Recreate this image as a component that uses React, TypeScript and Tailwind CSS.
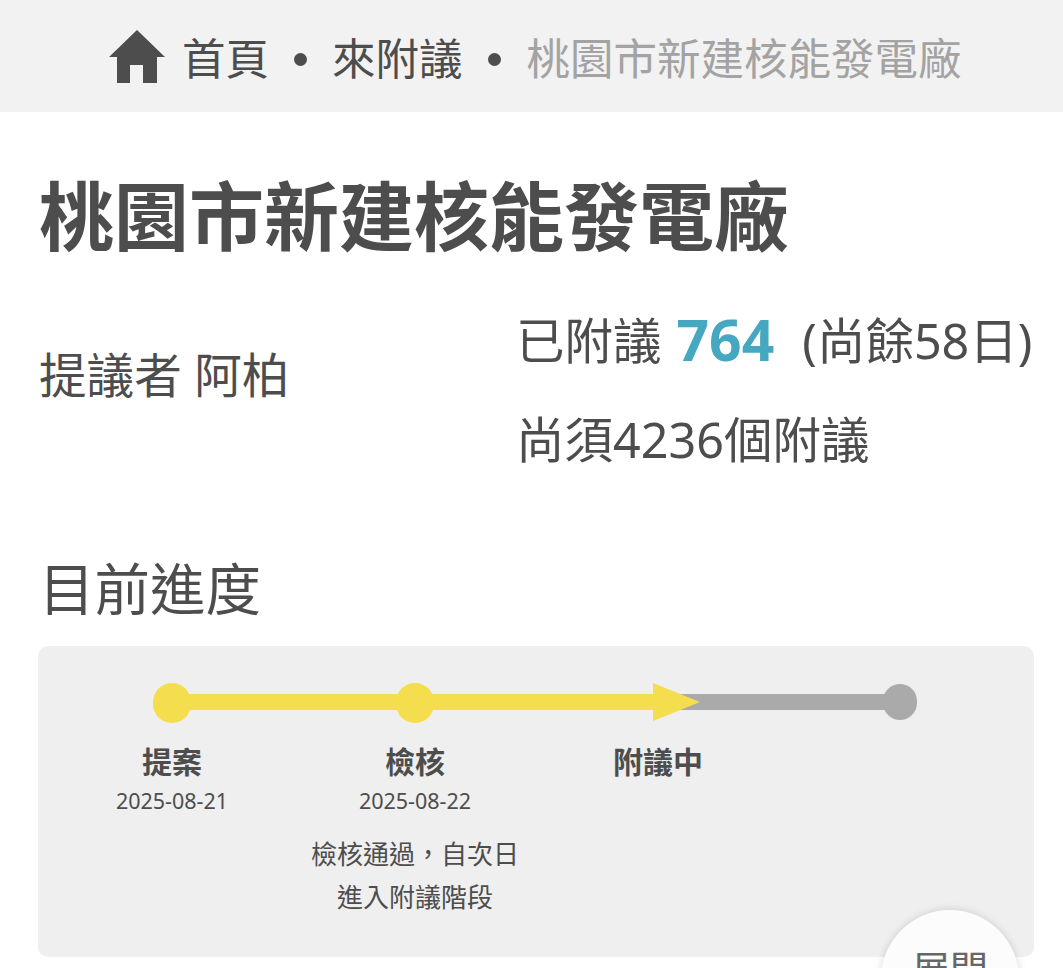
import React from "react";

const font = { fontFamily: '"Noto Sans", "Noto Sans CJK TC", sans-serif' };

function Dot({ gray }: { gray?: boolean }) {
  return <div className={gray ? "relative z-10 mt-[-3px] h-[36px] w-[34px] shrink-0 rounded-full bg-[#aaaaaa]" : "relative z-10 h-[40px] w-[38px] shrink-0 rounded-full bg-[#f5de4d]"} />;
}

function Step({ title, date, note }: { title: string; date?: string; note?: string[] }) {
  return (
    <div className="flex w-[243px] shrink-0 flex-col items-center text-center text-[#4d4d4d]">
      <div className="h-[44px] text-[30px] font-bold leading-[44px]">{title}</div>
      {date && <div className="mt-[2px] h-[30px] text-[21.5px] leading-[30px]">{date}</div>}
      {note && (
        <div className="mt-[17px] text-[26px] leading-[43px]">
          {note.map((n) => (
            <div key={n}>{n}</div>
          ))}
        </div>
      )}
    </div>
  );
}

export default function App() {
  return (
    <div style={font} className="relative h-[968px] w-[1063px] overflow-hidden bg-white text-[#4d4d4d]">
      <nav className="flex h-[112px] items-center bg-[#f2f2f2] pl-[109px] text-[43.5px]">
        <svg width="56" height="56" viewBox="0 0 56 56" className="mr-[17px] mt-[2px] shrink-0" fill="#4d4d4d">
          <path d="M28 1 L56 28 L48 28 L48 54 L34 54 L34 36 L21 36 L21 54 L8 54 L8 28 L0 28 Z" />
        </svg>
        <span className="mt-[6px]">首頁</span>
        <span className="ml-[25px] mr-[25px] mt-[6px] h-[13px] w-[13px] rounded-full bg-[#4d4d4d]" />
        <span className="mt-[6px]">來附議</span>
        <span className="ml-[25px] mr-[26px] mt-[6px] h-[13px] w-[13px] rounded-full bg-[#4d4d4d]" />
        <span className="mt-[6px] text-[#a3a3a3]">桃園市新建核能發電廠</span>
      </nav>

      <h1 className="ml-[39px] mt-[49px] text-[75px] font-bold leading-[110px]">桃園市新建核能發電廠</h1>

      <div className="mt-[29px] flex">
        <div className="ml-[39px] w-[477px] pt-[40px] text-[47.6px] leading-[70px]">提議者 阿柏</div>
        <div className="text-[48.5px]">
          <div className="flex h-[80px] items-center whitespace-nowrap">
            已附議
            <span className="ml-[15px] mr-[28px] text-[57px] font-bold text-[#45a8c0]">764</span>
            (尚餘58日)
          </div>
          <div className="mt-[24px] leading-[70px]">尚須4236個附議</div>
        </div>
      </div>

      <h2 className="ml-[39px] mt-[75px] text-[55.5px] leading-[80px]">目前進度</h2>

      <section className="ml-[38px] mt-[17px] h-[311px] w-[996px] rounded-[10px] bg-[#efefef] pl-[12.5px] pt-[37px]">
        <div className="ml-[102.5px] flex h-[40px] items-center">
          <Dot />
          <div className="ml-[-2px] mr-[-2px] mt-[-3px] h-[16px] w-[209px] bg-[#f5de4d]" />
          <Dot />
          <div className="ml-[-2px] mt-[-3px] h-[16px] w-[221px] bg-[#f5de4d]" />
          <svg width="47" height="38" viewBox="0 0 47 38" className="relative z-10 mt-[-2px] shrink-0" fill="#f5de4d">
            <path d="M0 0 L47 19 L0 38 Z" />
          </svg>
          <div className="ml-[-24px] mt-[-3px] h-[16px] w-[209px] bg-[#aaaaaa]" />
          <div className="ml-[-2px]">
            <Dot gray />
          </div>
        </div>
        <div className="mt-[17px] flex">
          <Step title="提案" date="2025-08-21" />
          <Step title="檢核" date="2025-08-22" note={["檢核通過\uFF0C自次日", "進入附議階段"]} />
          <Step title="附議中" />
        </div>
      </section>

      <button className="absolute left-[881px] top-[910px] flex h-[138px] w-[138px] items-start justify-center rounded-full bg-[#fcfcfc] pt-[33px] text-[38px] leading-[50px] text-[#666666] shadow-[0_0_8px_rgba(0,0,0,0.15)]">
        展開
      </button>
    </div>
  );
}
